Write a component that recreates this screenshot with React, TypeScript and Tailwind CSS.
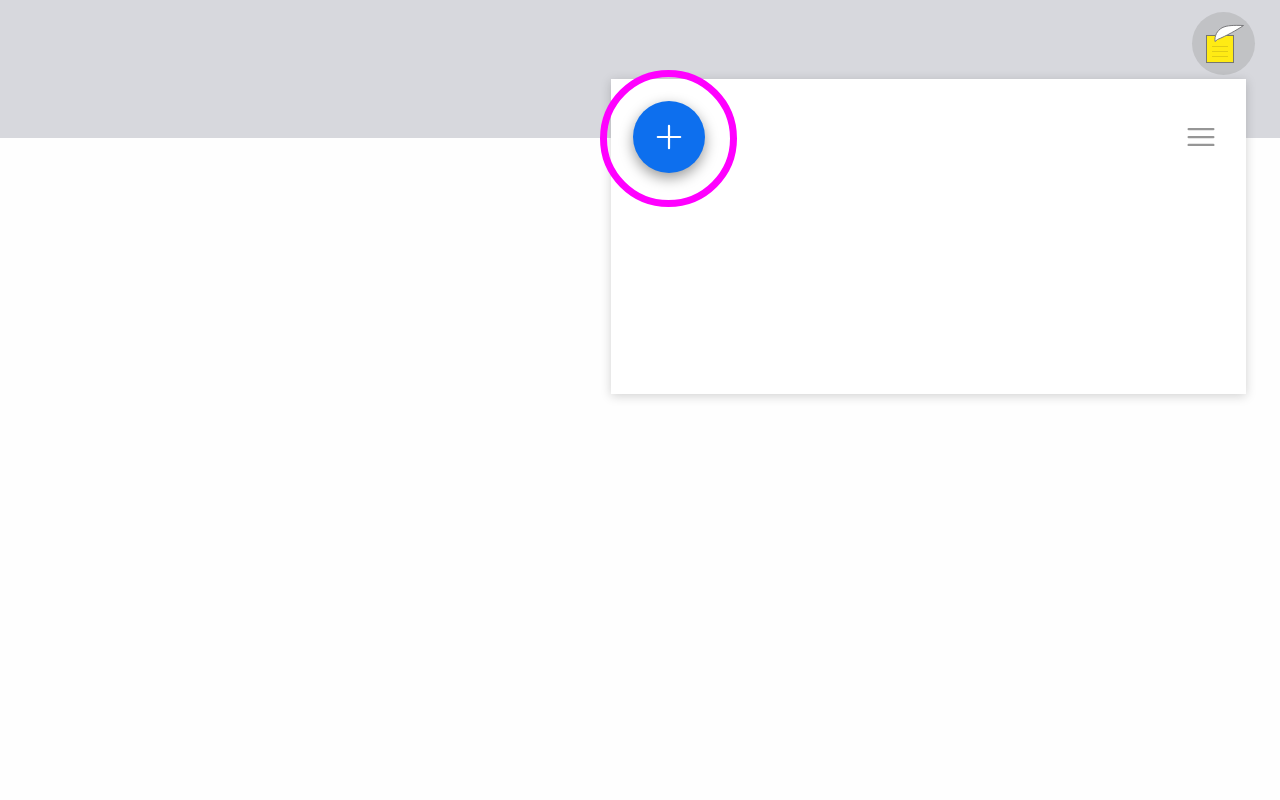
const NoteLogo = () => {
    return (
        <svg viewBox="0 0 63 63" className="h-full w-full" aria-hidden="true">
            <rect x="14.5" y="23.5" width="27" height="27" fill="#ffeb14" stroke="#77776f" />
            <path d="M20 34.5h16M20 39.5h16M20 44.5h16" stroke="#e0cc14" strokeWidth="1" />
            <path d="M23 29.5C22.4 24 25 18.6 30 15.8C35 13.2 42 13.2 51.5 13.5C45 18 34 24 25.5 27.5Z" fill="#fff" stroke="#77777a" strokeLinejoin="round" />
        </svg>
    )
}

const AddButton = () => {
    return (
        <div className="relative h-[72px] w-[72px]">
            <button type="button" aria-label="Add" className="flex h-full w-full items-center justify-center rounded-full bg-[#0d6fee] shadow-[0_5px_14px_rgba(0,0,0,0.4)]">
                <svg viewBox="0 0 26 26" className="h-[26px] w-[26px]" fill="none" stroke="#fff" strokeWidth="2.2" strokeLinecap="round">
                    <path d="M13 1.8v22.4M1.8 13h22.4" />
                </svg>
            </button>
            {/* highlight ring */}
            <span className="pointer-events-none absolute -top-[31px] -left-[33px] h-[137px] w-[137px] rounded-full border-[7px] border-[#ff00ff]" />
        </div>
    )
}

const App = () => {
    return (
        <div className="min-h-screen bg-[#fefefe]">
            <header className="flex h-[138px] justify-end bg-[#d7d8dd] pt-3 pr-[25px]">
                <button type="button" aria-label="Notes" className="h-[63px] w-[63px] rounded-full bg-[#c1c2c5]">
                    <NoteLogo />
                </button>
            </header>

            <main className="-mt-[59px] flex justify-end pr-[34px] pb-8">
                <section className="relative min-h-[315px] w-full max-w-[635px] bg-white shadow-[0_2px_10px_rgba(0,0,0,0.18)]">
                    <div className="flex items-center justify-between py-[22px] pr-[25px] pl-[22px]">
                        <AddButton />
                        <button type="button" aria-label="Menu" className="flex h-10 w-10 items-center justify-center">
                            <svg viewBox="0 0 28 20" className="h-5 w-7" fill="none" stroke="#969696" strokeWidth="2.4" strokeLinecap="round">
                                <path d="M1.7 2.1h24.6M1.7 10.1h24.6M1.7 17.9h24.6" />
                            </svg>
                        </button>
                    </div>
                </section>
            </main>
        </div>
    )
}

export default App;
